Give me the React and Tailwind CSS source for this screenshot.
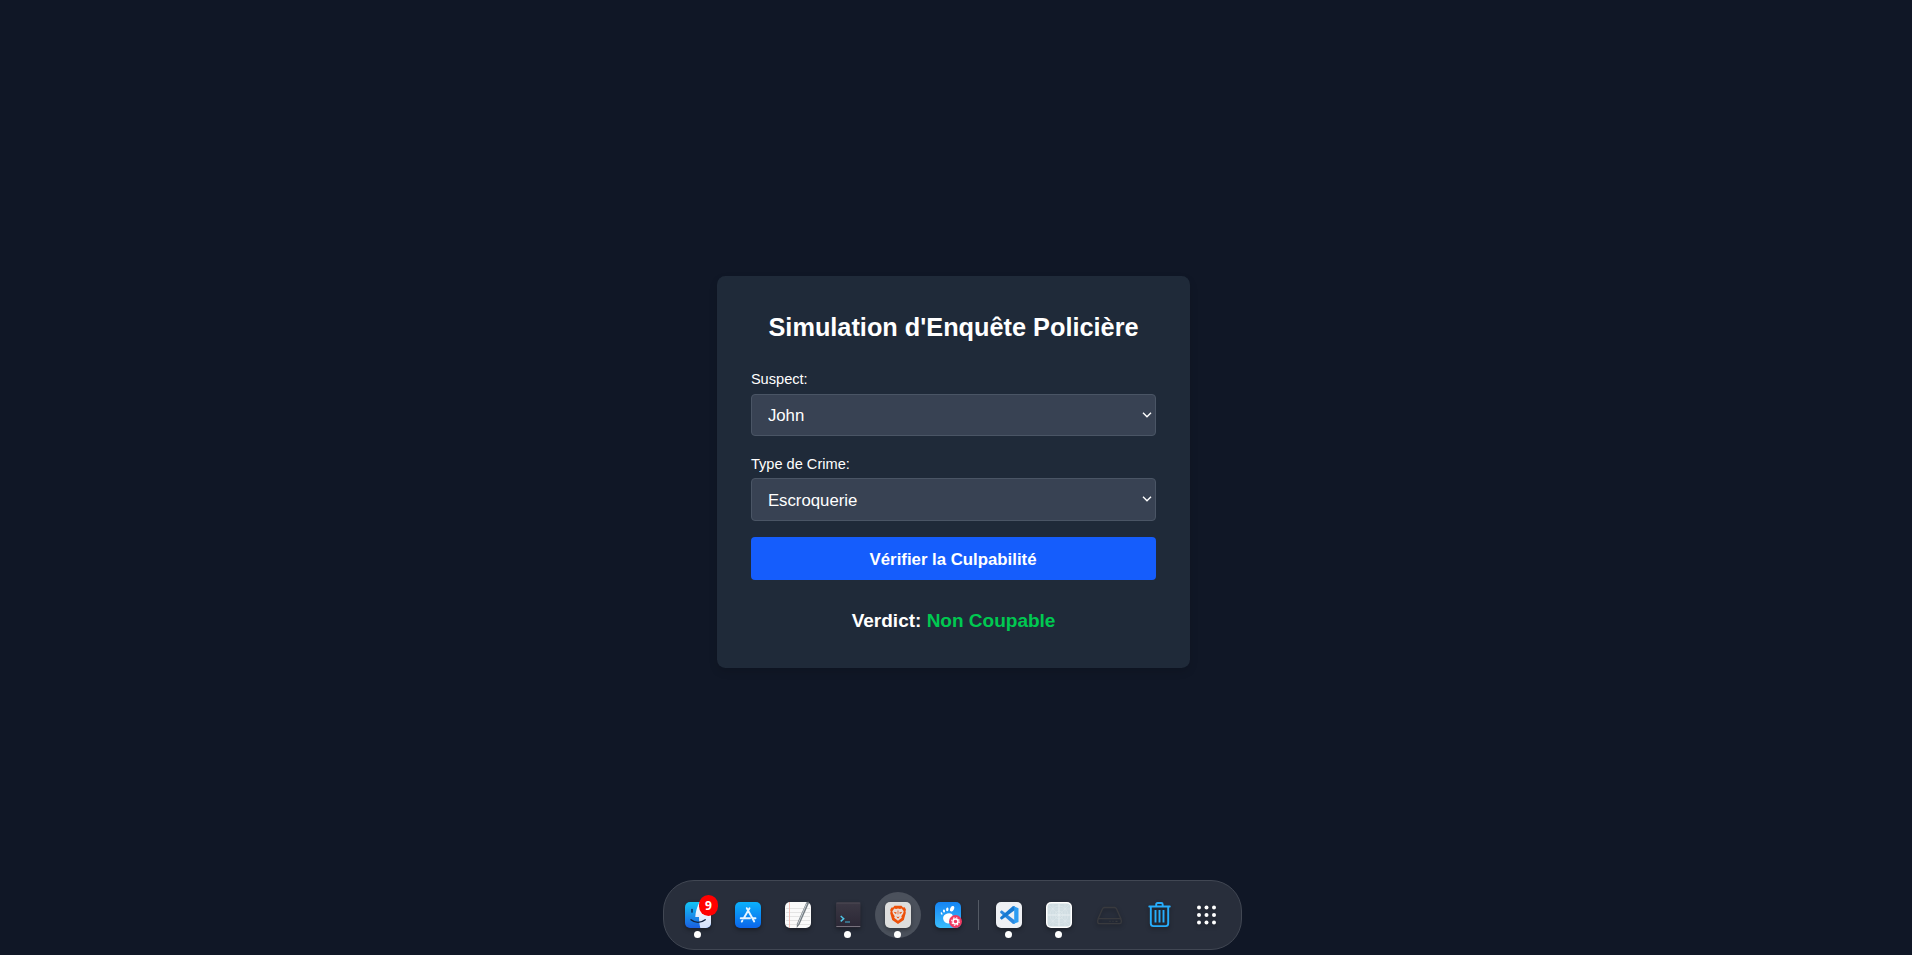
import React from "react";

const tile = "relative flex h-[26px] w-[26px] shrink-0 items-center justify-center";
const shade = "drop-shadow-[0_2px_2px_rgba(0,0,0,0.35)]";

function DockItem({ children, running, active, badge }) {
  return (
    <div className={tile}>
      {active && <span className="absolute -left-[10px] -top-[10px] h-[46px] w-[46px] rounded-full bg-[#4b515c]" />}
      <div className={`relative h-[26px] w-[26px] ${shade}`}>{children}</div>
      {running && <span className="absolute left-[9px] top-[29px] h-[7px] w-[7px] rounded-full bg-white" />}
      {badge && (
        <span className="absolute -top-[7px] left-[14px] flex h-[21px] w-[19px] items-center justify-center rounded-[9.5px] bg-[#ff0000] pt-px font-['Noto_Sans',sans-serif] text-[12px] font-bold text-white">
          {badge}
        </span>
      )}
    </div>
  );
}

function Finder() {
  return (
    <svg viewBox="0 0 26 26" className="block h-full w-full">
      <defs>
        <linearGradient id="fb" x1="0" y1="0" x2="0" y2="1"><stop offset="0" stopColor="#14c4f5" /><stop offset="1" stopColor="#1a5fe0" /></linearGradient>
        <linearGradient id="fw" x1="0" y1="0" x2="0" y2="1"><stop offset="0" stopColor="#fff" /><stop offset="1" stopColor="#d3e0fa" /></linearGradient>
        <clipPath id="fc"><rect width="26" height="26" rx="5" /></clipPath>
      </defs>
      <g clipPath="url(#fc)">
        <rect width="26" height="26" fill="url(#fb)" />
        <path d="M14.5 0C12 5 10.5 10 10.3 15H14c0 4 .5 7.500 1.300 11H26V0z" fill="url(#fw)" />
      </g>
      <path d="M7 7.500v2.600" stroke="#12325f" strokeWidth="1.600" strokeLinecap="round" />
      <path d="M6 17.700c4 3.500 10 3.500 14.200 0" fill="none" stroke="#12233f" strokeWidth="1.400" strokeLinecap="round" />
    </svg>
  );
}

function AppStore() {
  return (
    <svg viewBox="0 0 26 26" className="block h-full w-full">
      <defs><linearGradient id="as" x1="0" y1="0" x2="0" y2="1"><stop stopColor="#0bb1fb" /><stop offset="1" stopColor="#0b66ec" /></linearGradient></defs>
      <rect width="26" height="26" rx="5" fill="url(#as)" />
      <g stroke="#e7f5ff" strokeWidth="1.900" strokeLinecap="round" fill="none">
        <path d="M14.500 6.200L8.600 16.500M11.800 6.200L19.200 19.500M5.700 16.300h9.300M18 16.300h2.500M7.300 18.700l-.5.900" />
      </g>
    </svg>
  );
}

function Notes() {
  return (
    <svg viewBox="0 0 26 26" className="block h-full w-full overflow-visible">
      <rect width="26" height="26" rx="5" fill="#fafafa" />
      <path d="M1 6.500h24M1 10.500h24M1 14.500h24M1 18.500h24M1 22.500h24" stroke="#dedede" strokeWidth=".8" />
      <path d="M4.500 0v26" stroke="#efb7ae" strokeWidth=".8" />
      <path d="M21.300 0.500l2-1 .5 2-9.300 21-2.800 3.500.2-4.300z" fill="#727a80" />
      <path d="M21.800 1.500L12.700 22.700" stroke="#c4cbd0" strokeWidth="1" />
    </svg>
  );
}

function Terminal() {
  return (
    <svg viewBox="0 0 26 26" className="block h-full w-full">
      <defs><linearGradient id="tm" x1="0" y1="0" x2="0" y2="1"><stop stopColor="#3b3844" /><stop offset="1" stopColor="#2b2735" /></linearGradient></defs>
      <rect x="1" y=".5" width="24.500" height="25" rx="1.500" fill="url(#tm)" />
      <path d="M1.300 1h24" stroke="#55515c" strokeWidth=".8" />
      <path d="M1.300 24.500h24" stroke="#77727d" strokeWidth="1" />
      <path d="M5.700 14l3 2.700-3 2.700" fill="none" stroke="#4fc4e4" strokeWidth="1.500" />
      <path d="M10 20h5" stroke="#3f8ea9" strokeWidth="1.400" />
    </svg>
  );
}

function Brave() {
  return (
    <svg viewBox="0 0 26 26" className="block h-full w-full">
      <rect width="26" height="26" rx="5" fill="#dededd" />
      <path d="M9.500 3.800h7l1.500 1.600 1.700-.1 1.300 2.500-.5 1.500.3 1.500-2 7.300-5.800 4-5.800-4L5.200 11l.5-1.500L5.100 8l1.400-2.500 1.600.1z" fill="#ed5009" />
      <path d="M9.300 6.500l1.800.4L13 6.500l1.900.4 1.800-.4 2 2.800-.6 2.100-1.800 2.800.5 1.500-3.800 3-3.800-3 .5-1.500-1.800-2.800-.6-2.100z" fill="#e8ddd8" />
      <path d="M8.700 9.800l3 .8-.3 1-1.200.2zM17.300 9.800l-3 .8.300 1 1.200.2zM12.600 8.500h.8l-.1 4h-.6zM11.300 14.400l1.700.7 1.700-.7-1.300 1.900h-.8z" fill="#ed5009" />
    </svg>
  );
}

function Gnome() {
  return (
    <svg viewBox="0 0 26 26" className="block h-full w-full overflow-visible">
      <defs><linearGradient id="gn" x1="0" y1="0" x2="0" y2="1"><stop stopColor="#1484f4" /><stop offset="1" stopColor="#3bbdfb" /></linearGradient></defs>
      <rect width="26" height="26" rx="5" fill="url(#gn)" />
      <g fill="#fff">
        <ellipse cx="17.100" cy="6.700" rx="1.900" ry="2.900" transform="rotate(25 17.100 6.700)" />
        <ellipse cx="12.300" cy="7.300" rx="1.200" ry="1.900" transform="rotate(5 12.300 7.300)" />
        <ellipse cx="9" cy="9" rx="1" ry="1.500" transform="rotate(-10 9 9)" />
        <ellipse cx="6.600" cy="11.500" rx=".8" ry="1.300" transform="rotate(-25 6.600 11.500)" />
        <path d="M16.800 12c-2.200-1.800-7.500-.4-8.500 2.800-.9 3 1.600 6.700 5 6.800 2 0 2.300-1.700 2-2.800-.4-1.500.1-2 1-2.800 1.600-1.200 1.900-2.900.5-4z" />
      </g>
      <circle cx="20.500" cy="19.500" r="6.500" fill="#ef3a62" />
      <circle cx="20.500" cy="19.500" r="2.500" fill="none" stroke="#fff" strokeWidth="1.500" />
      <circle cx="20.500" cy="19.500" r="3.800" fill="none" stroke="#fff" strokeWidth="1.100" strokeDasharray="1.500 1.485" />
    </svg>
  );
}

function Code() {
  return (
    <svg viewBox="0 0 26 26" className="block h-full w-full">
      <rect width="26" height="26" rx="5" fill="#eef0f4" />
      <path d="M4.200 9.500l1.500-1.200L19 18.500v3L17 22 4.200 10.700z" fill="#2b87df" />
      <path d="M4.200 16.500l1.500 1.200L19 8V4.500L17 4 4.200 15.300z" fill="#1879d1" />
      <path d="M17.200 4l5.300 2.200v13.700L17.200 22l1-2V6z" fill="#2c9cf2" />
    </svg>
  );
}

function Boxes() {
  return (
    <svg viewBox="0 0 26 26" className="block h-full w-full">
      <rect width="26" height="26" rx="5" fill="#fff" />
      <rect x="1.500" y="1.500" width="23" height="23" rx="3.500" fill="#d0dde2" />
      <g stroke="#e0e9ed" strokeWidth=".5" fill="none">
        <path d="M3 3l20 20M23 3L3 23M7 1.500v23M19 1.500v23M1.500 7h23M1.500 19h23" />
        <circle cx="13" cy="13" r="4" /><circle cx="13" cy="13" r="9" />
      </g>
      <path d="M13 1.500v23M1.500 13h23" stroke="#eef4f6" strokeWidth=".8" />
    </svg>
  );
}

function Drive() {
  return (
    <svg viewBox="0 0 26 26" className="block h-full w-full" fill="none" stroke="#393a3e" strokeWidth="1.300">
      <path d="M2 17L6.500 6.800c.4-.8 1-1.300 1.900-1.300h10.200c.9 0 1.500.5 1.900 1.300L25 17" />
      <rect x="1.700" y="16.700" width="23.600" height="5" rx="1.800" />
      <path d="M13.500 19.300h1M16.500 19.300h1M19.500 19.300h2" />
    </svg>
  );
}

function Trash() {
  return (
    <svg viewBox="0 0 26 26" className="block h-full w-full" fill="none" stroke="#27adfc" strokeWidth="1.900">
      <path d="M3.300 4.500h20.500" strokeLinecap="round" />
      <path d="M10.200 4.500V2.500c0-.9.500-1.500 1.400-1.500h3.700c.9 0 1.400.6 1.400 1.500v2M4.800 4.500v17c0 1.800 1 2.600 2.700 2.600h12c1.700 0 2.700-.8 2.700-2.600v-17" />
      <path d="M9.500 8v12.500M13.500 8v12.500M17.500 8v12.500" />
    </svg>
  );
}

function Grid() {
  return (
    <svg viewBox="0 0 26 26" className="block h-full w-full" fill="#fff">
      {[5.5, 13, 20.5].map((y) => [5, 12.5, 20].map((x) => <circle key={`${x}-${y}`} cx={x} cy={y} r="2" />))}
    </svg>
  );
}

function Dock() {
  return (
    <nav className="ml-[663px] flex h-[70px] w-[579px] shrink-0 items-center rounded-[31px] border border-[#414753] bg-[#282e3b] pb-[1px] pl-[21px]">
      <div className="flex gap-6">
        <DockItem running badge="9"><Finder /></DockItem>
        <DockItem><AppStore /></DockItem>
        <DockItem><Notes /></DockItem>
        <DockItem running><Terminal /></DockItem>
        <DockItem running active><Brave /></DockItem>
        <DockItem><Gnome /></DockItem>
      </div>
      <div className="ml-[17px] mr-[17px] h-[30px] w-px bg-[#545a65]" />
      <div className="flex gap-6">
        <DockItem running><Code /></DockItem>
        <DockItem running><Boxes /></DockItem>
        <DockItem><Drive /></DockItem>
        <DockItem><Trash /></DockItem>
      </div>
      <div className="ml-[22px]"><DockItem><Grid /></DockItem></div>
    </nav>
  );
}

function Field({ label, id, options, selectClass = "" }) {
  return (
    <div className="mb-[16.3px]">
      <label htmlFor={id} className="mb-[3.5px] block pt-px text-[14.6px] leading-[21px] text-white">{label}</label>
      <div className="relative">
        <select id={id} className={`block h-[42.7px] w-full appearance-none rounded border border-[#4a5565] bg-[#384253] px-4 text-[16.8px] text-white ${selectClass}`}>
          {options.map((o) => <option key={o}>{o}</option>)}
        </select>
        <svg viewBox="0 0 10 6" className="pointer-events-none absolute right-[4px] top-[18px] h-[6px] w-[10px]" fill="none" stroke="#fff" strokeWidth="1.400">
          <path d="M1 .8l4 3.900 4-3.900" />
        </svg>
      </div>
    </div>
  );
}

export default function App() {
  return (
    <div className="flex h-[955px] w-full flex-col overflow-hidden bg-[#101726] font-['Liberation_Sans',Arial,sans-serif] text-white">
      <main className="h-[880px] shrink-0 pl-[717.3px] pt-[275.7px]">
        <div className="h-[392px] w-[472.5px] rounded-[8.4px] bg-[#1f2a39] px-[33.6px] pt-[34.6px] shadow-[0_4px_8px_rgba(0,0,0,0.12)]">
          <h1 className="mb-[24px] whitespace-nowrap text-center text-[25.3px] font-bold leading-[34px]">Simulation d'Enquête Policière</h1>
          <Field label="Suspect:" id="suspect" options={["John"]} />
          <Field label="Type de Crime:" id="crime" options={["Escroquerie"]} selectClass="pt-[2px]" />
          <button className="block h-[42.7px] w-full rounded bg-[#155dfc] pr-px pt-[2px] text-[16.8px] font-bold">Vérifier la Culpabilité</button>
          <p className="mt-[26.5px] text-center text-[19px] font-bold leading-[29px]">
            Verdict: <span className="text-[#00c951]">Non Coupable</span>
          </p>
        </div>
      </main>
      <Dock />
    </div>
  );
}
